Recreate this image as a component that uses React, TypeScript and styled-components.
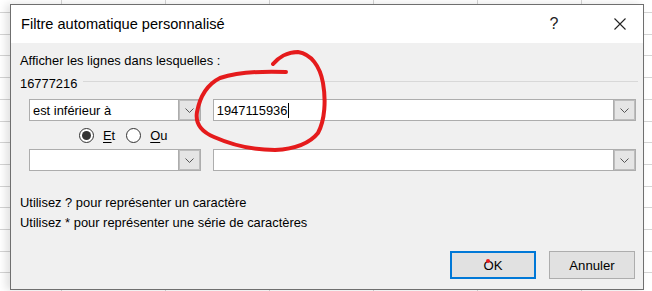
import React, { useState } from "react";
import styled, { createGlobalStyle } from "styled-components";

const GlobalStyle = createGlobalStyle`
    html, body {
        margin: 0;
        padding: 0;
        background: #ffffff;
    }
    body {
        font-family: "Liberation Sans", Arial, sans-serif;
        color: #000;
    }
`;

const Sheet = styled.div`
    width: 652px;
    height: 291px;
    overflow: hidden;
    background-color: #fff;
    background-image:
        repeating-linear-gradient(to right, transparent 0 82px, #d4d4d4 82px 83px, transparent 83px 104px),
        repeating-linear-gradient(to bottom, transparent 0 12px, #d4d4d4 12px 13px, transparent 13px 21.7px);
    background-position: -21px 0, 0 0;
    padding: 4px 0 0 10px;
    box-sizing: border-box;
`;

const Dialog = styled.div`
    position: relative;
    width: 634px;
    height: 286px;
    box-sizing: border-box;
    border: 1px solid #6f6f6f;
    background: #f0f0f0;
    display: flex;
    flex-direction: column;
    box-shadow: -4px 0 8px rgba(0, 0, 0, 0.12);
`;

const TitleBar = styled.div`
    height: 38px;
    background: #fff;
    display: flex;
    align-items: center;
    padding-left: 10px;
`;

const Title = styled.div`
    flex: 1;
    font-size: 14.6px;
    color: #000;
`;

const HelpMark = styled.div`
    width: 20px;
    font-size: 16px;
    color: #222;
    margin-right: 38px;
    text-align: center;
`;

const CloseBox = styled.div`
    width: 36px;
    margin-right: 5px;
    display: flex;
    justify-content: center;
`;

const Body = styled.div`
    flex: 1;
    display: flex;
    flex-direction: column;
    padding: 9px 7px 0 9px;
    font-size: 12.9px;
`;

const Line = styled.div<{ top?: number }>`
    height: 18px;
    line-height: 18px;
    margin-top: ${p => p.top ?? 0}px;
    white-space: nowrap;
`;

const GroupLabel = styled.div`
    display: flex;
    align-items: center;
    gap: 6px;
    height: 18px;
    margin-top: 4px;
    margin-right: -2px;
`;

const Separator = styled.div`
    flex: 1;
    height: 1px;
    background: #d8d8d8;
    margin-top: -3px;
`;

const ComboRow = styled.div<{ top: number }>`
    display: flex;
    gap: 12px;
    margin-top: ${p => p.top}px;
    padding-left: 9px;
`;

const Combo = styled.div<{ w: number }>`
    width: ${p => p.w}px;
    height: 22px;
    box-sizing: border-box;
    border: 1px solid #adadad;
    background: #fff;
    display: flex;
`;

const ComboText = styled.div`
    flex: 1;
    display: flex;
    align-items: center;
    padding-left: 3px;
    white-space: nowrap;
    overflow: hidden;
`;

const Caret = styled.span`
    display: inline-block;
    width: 1px;
    height: 15px;
    background: #000;
    margin-left: 1px;
`;

const DropButton = styled.div`
    width: 21px;
    background: #e5e5e5;
    box-shadow: inset 0 0 0 1px #bdbdbd;
    border-left: 1px solid #adadad;
    display: flex;
    align-items: center;
    justify-content: center;
`;

const RadioRow = styled.div`
    display: flex;
    align-items: center;
    height: 16px;
    margin-top: 6px;
    padding-left: 59px;
    gap: 10px;
`;

const RadioItem = styled.label`
    display: flex;
    align-items: center;
    gap: 9px;
    margin-right: 1px;
`;

const RadioDot = styled.span<{ checked: boolean }>`
    width: 15px;
    height: 15px;
    box-sizing: border-box;
    border-radius: 50%;
    border: 1px solid #333;
    background: #fff;
    display: flex;
    align-items: center;
    justify-content: center;

    &::after {
        content: "";
        width: 9px;
        height: 9px;
        border-radius: 50%;
        background: ${p => (p.checked ? "#333" : "transparent")};
    }
`;

const Key = styled.span`
    text-decoration: underline;
    text-underline-offset: 2px;
`;

const ButtonRow = styled.div`
    display: flex;
    justify-content: flex-end;
    gap: 13px;
    margin-top: auto;
    margin-bottom: 10px;
    margin-right: 1px;
`;

const DialogButton = styled.button<{ primary?: boolean }>`
    position: relative;
    width: 86px;
    height: 28px;
    box-sizing: border-box;
    font-family: inherit;
    font-size: 13.2px;
    color: #000;
    background: #e1e1e1;
    border: ${p => (p.primary ? "2px solid #0078d7" : "1px solid #adadad")};
    padding: 0;
`;

const RedDot = styled.span`
    position: absolute;
    left: 34px;
    top: 6px;
    width: 4px;
    height: 4px;
    border-radius: 50%;
    background: #e8191b;
`;

const Annotation = styled.svg`
    position: absolute;
    left: -11px;
    top: -5px;
    width: 652px;
    height: 291px;
    pointer-events: none;
`;

const Chevron: React.FC = () => (
    <svg width="9" height="5" viewBox="0 0 9 5">
        <path d="M0.5 0.5 L4.5 4.5 L8.5 0.5" fill="none" stroke="#555" strokeWidth="1" />
    </svg>
);

const CloseIcon: React.FC = () => (
    <svg width="12" height="12" viewBox="0 0 12 12">
        <path d="M0.5 0.5 L11.5 11.5 M11.5 0.5 L0.5 11.5" stroke="#222" strokeWidth="1.1" />
    </svg>
);

export default function App() {
    const [joiner, setJoiner] = useState<"et" | "ou">("et");

    return (
        <>
            <GlobalStyle />
            <Sheet>
                <Dialog>
                    <TitleBar>
                        <Title>Filtre automatique personnalisé</Title>
                        <HelpMark>?</HelpMark>
                        <CloseBox>
                            <CloseIcon />
                        </CloseBox>
                    </TitleBar>
                    <Body>
                        <Line>Afficher les lignes dans lesquelles :</Line>
                        <GroupLabel>
                            <span>16777216</span>
                            <Separator />
                        </GroupLabel>
                        <ComboRow top={7}>
                            <Combo w={172}>
                                <ComboText>est inférieur à</ComboText>
                                <DropButton>
                                    <Chevron />
                                </DropButton>
                            </Combo>
                            <Combo w={424}>
                                <ComboText>
                                    1947115936
                                    <Caret />
                                </ComboText>
                                <DropButton>
                                    <Chevron />
                                </DropButton>
                            </Combo>
                        </ComboRow>
                        <RadioRow>
                            <RadioItem onClick={() => setJoiner("et")}>
                                <RadioDot checked={joiner === "et"} />
                                <span>
                                    <Key>E</Key>t
                                </span>
                            </RadioItem>
                            <RadioItem onClick={() => setJoiner("ou")}>
                                <RadioDot checked={joiner === "ou"} />
                                <span>
                                    <Key>O</Key>u
                                </span>
                            </RadioItem>
                        </RadioRow>
                        <ComboRow top={6}>
                            <Combo w={172}>
                                <ComboText />
                                <DropButton>
                                    <Chevron />
                                </DropButton>
                            </Combo>
                            <Combo w={424}>
                                <ComboText />
                                <DropButton>
                                    <Chevron />
                                </DropButton>
                            </Combo>
                        </ComboRow>
                        <Line top={23}>Utilisez ? pour représenter un caractère</Line>
                        <Line top={2}>Utilisez * pour représenter une série de caractères</Line>
                        <ButtonRow>
                            <DialogButton primary>
                                <RedDot />
                                OK
                            </DialogButton>
                            <DialogButton>Annuler</DialogButton>
                        </ButtonRow>
                    </Body>
                    <Annotation viewBox="0 0 652 291">
                        <path
                            d="M286 72 C262 71 236 73 220 78 C208 84 200 96 197 112 C195 124 202 132 214 137 C232 145 255 150 275 150 C295 149 310 143 318 133 C325 120 326 100 323 83 C320 66 311 54 298 52 C287 52 278 58 273 64"
                            fill="none"
                            stroke="#e51b1c"
                            strokeWidth="4"
                            strokeLinecap="round"
                        />
                    </Annotation>
                </Dialog>
            </Sheet>
        </>
    );
}
